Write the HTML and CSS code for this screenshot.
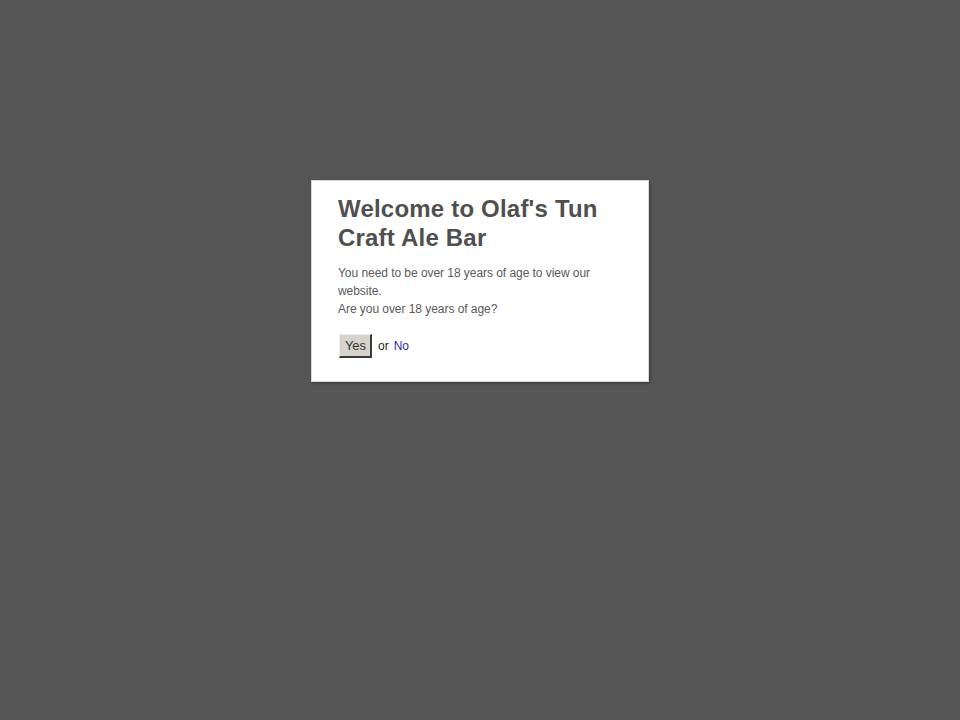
FILE: index.html
```html
<!DOCTYPE html>
<html>
<head>
<meta charset="utf-8">
<link rel="stylesheet" href="styles.css">
</head>
<body>
<div class="overlay">
  <div class="modal">
    <h1 class="title">Welcome to Olaf's Tun Craft Ale Bar</h1>
    <p class="text">You need to be over 18 years of age to view our website.<br>Are you over 18 years of age?</p>
    <div class="actions">
      <button class="yes">Yes</button>
      <span class="or">or</span>
      <a class="no" href="#no">No</a>
    </div>
  </div>
</div>
</body>
</html>
```
FILE: styles.css
```css
html, body {
  margin: 0;
  padding: 0;
  height: 100%;
  background: #565656;
}
.overlay {
  display: flex;
  justify-content: center;
  align-items: flex-start;
  padding-top: 180px;
}
.modal {
  width: 338px;
  box-sizing: border-box;
  background: #fff;
  border: 1px solid #d8d8d8;
  box-shadow: 1px 1px 3px rgba(0,0,0,0.35);
  padding: 13px 26px 23px 26px;
  font-family: "Liberation Sans", Arial, sans-serif;
}
.title {
  margin: 0;
  font-size: 24px;
  line-height: 29px;
  font-weight: bold;
  letter-spacing: 0.2px;
  color: #4f4f4f;
}
.text {
  margin: 12px 0 16px 0;
  font-size: 12px;
  line-height: 18px;
  letter-spacing: -0.05px;
  color: #5a5a5a;
}
.actions {
  display: flex;
  align-items: center;
}
.yes {
  font-family: "Liberation Sans", Arial, sans-serif;
  font-size: 13px;
  color: #333;
  background: #d6d3cc;
  border-style: solid;
  border-width: 1px 2px 2px 1px;
  border-color: #eeeeee #3a3a3a #3a3a3a #eeeeee;
  padding: 3px 2px 3px 3px;
  margin: 0 0 0 1px;
  height: 24px;
  width: 33px;
}
.or {
  font-size: 12px;
  color: #222;
  margin-left: 6px;
}
.no,
.no:link,
.no:visited {
  font-size: 12px;
  color: #2b2bb0;
  text-decoration: none;
  margin-left: 5px;
}
```
